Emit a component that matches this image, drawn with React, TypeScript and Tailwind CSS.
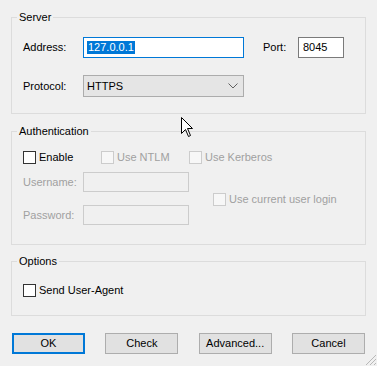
import clsx from "clsx";

const font = "font-['Segoe_UI','Liberation_Sans',Arial,sans-serif]";

function Box({ title, className, children }: { title: string; className?: string; children: React.ReactNode }) {
  return (
    <fieldset className={clsx("border border-[#dcdcdc] px-[11px] m-0", className)}>
      <legend className="-ml-[6px] px-[2px] leading-[14px] text-black">{title}</legend>
      {children}
    </fieldset>
  );
}

function Check({ label, disabled }: { label: string; disabled?: boolean }) {
  return (
    <label className="flex items-center h-[17px]">
      <span
        className={clsx(
          "w-[13px] h-[13px] border",
          disabled ? "border-[#cccccc] bg-[#f7f7f7]" : "border-[#333333] bg-white"
        )}
      />
      <span className={clsx("ml-[3px] whitespace-nowrap", disabled ? "text-[#a0a0a0]" : "text-black")}>{label}</span>
    </label>
  );
}

function Button({ label, primary }: { label: string; primary?: boolean }) {
  return (
    <button
      className={clsx(
        "w-[73px] h-[21px] bg-[#e1e1e1] text-black leading-none",
        primary ? "border-2 border-[#0078d7]" : "border border-[#adadad]"
      )}
    >
      {label}
    </button>
  );
}

export default function App() {
  return (
    <div className={clsx("relative w-[377px] h-[366px] bg-[#f0f0f0] px-[11px] pt-[10px] text-[11px] overflow-hidden", font)}>
      <Box title="Server" className="h-[104px]">
        <div className="flex items-center mt-[13px] h-[21px]">
          <span className="w-[60px]">Address:</span>
          <div className="w-[161px] h-[21px] border border-[#0078d7] bg-white flex items-center pl-[3px]">
            <span className="bg-[#0078d7] text-white leading-[13px] px-[1px]">127.0.0.1</span>
          </div>
          <span className="ml-[19px] w-[35px]">Port:</span>
          <div className="w-[46px] h-[21px] border border-[#7a7a7a] bg-white flex items-center pl-[4px]">8045</div>
        </div>
        <div className="flex items-center mt-[17px] h-[22px]">
          <span className="w-[60px]">Protocol:</span>
          <div className="w-[161px] h-[22px] border border-[#acacac] bg-[#e5e5e5] flex items-center justify-between pl-[3px] pr-[5px]">
            <span>HTTPS</span>
            <svg width="10" height="6" viewBox="0 0 10 6" fill="none" stroke="#606060" strokeWidth="1">
              <path d="M0.5 0.5 L5 5 L9.5 0.5" />
            </svg>
          </div>
        </div>
      </Box>

      <Box title="Authentication" className="mt-[10px] h-[121px]">
        <div className="flex items-center mt-[11px]">
          <div className="w-[78px]">
            <Check label="Enable" />
          </div>
          <div className="w-[88px]">
            <Check label="Use NTLM" disabled />
          </div>
          <Check label="Use Kerberos" disabled />
        </div>
        <div className="flex items-center mt-[6px]">
          <div className="flex flex-col gap-[13px]">
            <div className="flex items-center h-[20px]">
              <span className="w-[60px] text-[#a0a0a0]">Username:</span>
              <div className="w-[106px] h-[20px] border border-[#cccccc] bg-[#f0f0f0]" />
            </div>
            <div className="flex items-center h-[20px]">
              <span className="w-[60px] text-[#a0a0a0]">Password:</span>
              <div className="w-[106px] h-[20px] border border-[#cccccc] bg-[#f0f0f0]" />
            </div>
          </div>
          <div className="ml-[24px] mt-[1px]">
            <Check label="Use current user login" disabled />
          </div>
        </div>
      </Box>

      <Box title="Options" className="mt-[9px] h-[62px]">
        <div className="mt-[14px]">
          <Check label="Send User-Agent" />
        </div>
      </Box>

      <div className="flex justify-between mt-[17px] pl-[1px] pr-[1px]">
        <Button label="OK" primary />
        <Button label="Check" />
        <Button label="Advanced..." />
        <Button label="Cancel" />
      </div>

      <svg className="absolute left-[181px] top-[117px]" width="13" height="21" viewBox="0 0 13 21">
        <path d="M0.5 0.5 L0.5 16.5 L4.5 12.5 L7.5 19.5 L9.5 18.5 L6.5 11.5 L11.5 11.5 Z" fill="white" stroke="black" strokeWidth="1" />
      </svg>

      <svg className="absolute right-0 bottom-0" width="12" height="12" viewBox="0 0 12 12" stroke="#b8b8b8" strokeWidth="1">
        <path d="M11 1 L1 11 M11 5 L5 11 M11 9 L9 11" />
      </svg>
    </div>
  );
}
